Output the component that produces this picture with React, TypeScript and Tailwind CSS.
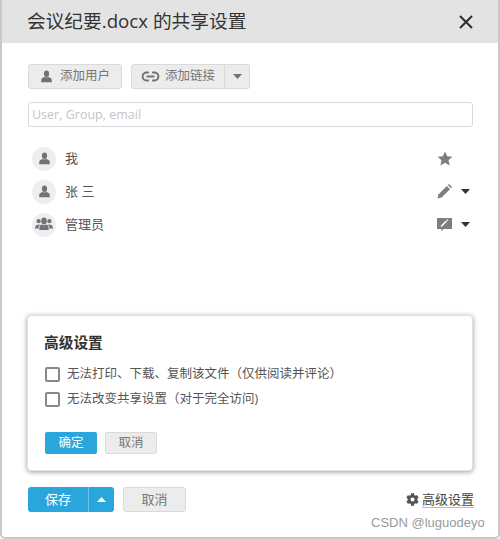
import { Link2 } from 'lucide-react';
import { FaCog } from 'react-icons/fa';

const cjk = 'font-["Open_Sans","Noto_Sans_CJK_SC",sans-serif]';

function UserIcon({ size = 14 }: { size?: number }) {
  return (
    <svg width={size} height={size} viewBox="0 0 16 16" fill="currentColor">
      <ellipse cx="8" cy="4.6" rx="3.2" ry="4" />
      <path d="M5.8 8.4 C4 9.6 1.5 10 1.5 12.6 V15 H14.5 V12.6 C14.5 10 12 9.6 10.2 8.4 C9 9.6 7 9.6 5.8 8.4 Z" />
    </svg>
  );
}

function GroupIcon() {
  return (
    <svg width="18" height="15" viewBox="0 0 18 15" fill="currentColor">
      <circle cx="3.6" cy="4.2" r="2.1" />
      <circle cx="14.4" cy="4.2" r="2.1" />
      <ellipse cx="9" cy="4" rx="2.8" ry="3.4" />
      <path d="M0 11 C0 8.4 2 7.4 4.4 7.4 L5 7.8 C4 8.6 3.6 9.8 3.6 11.6 H0 Z" />
      <path d="M18 11 C18 8.4 16 7.4 13.6 7.4 L13 7.8 C14 8.6 14.4 9.8 14.4 11.6 H18 Z" />
      <path d="M6.4 7.6 C8 8.6 10 8.6 11.6 7.6 C13 8.2 13.6 9.6 13.6 11 V13 H4.4 V11 C4.4 9.6 5 8.2 6.4 7.6 Z" />
    </svg>
  );
}

function Caret({ up = false, className = '' }: { up?: boolean; className?: string }) {
  return (
    <svg width="9" height="5" viewBox="0 0 9 5" fill="currentColor" className={className}>
      <path d={up ? 'M0 5 L4.5 0 L9 5 Z' : 'M0 0 L9 0 L4.5 5 Z'} />
    </svg>
  );
}

function Avatar({ children }: { children: React.ReactNode }) {
  return (
    <div className="w-6 h-6 rounded-full bg-[#eceef0] text-[#707478] flex items-center justify-center">
      {children}
    </div>
  );
}

function Row({ icon, name, action }: { icon: React.ReactNode; name: string; action: React.ReactNode }) {
  return (
    <div className="h-[33px] flex items-center pl-[4px]">
      <Avatar>{icon}</Avatar>
      <span className="ml-[9px] text-[13px] text-[#555]">{name}</span>
      <div className="ml-auto w-[36px] flex items-center text-[#7b7e82]">{action}</div>
    </div>
  );
}

function Check({ label }: { label: string }) {
  return (
    <div className="h-[25px] flex items-center">
      <span className="w-[15px] h-[15px] border-2 border-[#85888c] rounded-[2px] bg-white" />
      <span className="ml-[7px] text-[12.5px] text-[#555]">{label}</span>
    </div>
  );
}

export default function App() {
  return (
    <div className={`relative w-[500px] h-[539px] bg-white overflow-hidden ${cjk}`}>
      <div className="h-[539px] border-l-2 border-r-2 border-b-2 border-[#c9c9c9] rounded-b-[5px] flex flex-col">
        {/* header */}
        <div className="h-[43px] shrink-0 bg-[#e3e3e3] flex items-center justify-between pl-[25px] pr-[25px]">
          <span className="text-[18.7px] text-[#333]">会议纪要.docx 的共享设置</span>
          <svg width="14" height="14" viewBox="0 0 14 14" stroke="#2d2d2d" strokeWidth="2" fill="none">
            <path d="M1 1 L13 13 M13 1 L1 13" />
          </svg>
        </div>

        <div className="flex-1 flex flex-col pl-[26px] pr-[25px]">
          {/* add buttons */}
          <div className="mt-[21px] flex items-center">
            <button className="w-[94px] h-[25px] bg-[#ececec] border border-[#dadada] rounded-[3px] flex items-center justify-center gap-[7px] text-[12.5px] text-[#777]">
              <span className="text-[#6f7276]"><UserIcon size={13} /></span>
              添加用户
            </button>
            <div className="ml-[9px] h-[25px] flex">
              <button className="w-[94px] h-[25px] bg-[#ececec] border border-[#dadada] rounded-l-[3px] flex items-center justify-center gap-[5px] text-[12.5px] text-[#777]">
                <Link2 size={19} className="text-[#6f7276]" strokeWidth={2.4} />
                添加链接
              </button>
              <button className="w-[25px] h-[25px] bg-[#ececec] border border-l-0 border-[#dadada] rounded-r-[3px] flex items-center justify-center text-[#6f7276]">
                <Caret />
              </button>
            </div>
          </div>

          {/* search */}
          <input
            className="mt-[13px] w-[445px] h-[25px] border border-[#d9d9d9] rounded-[3px] px-[3px] text-[12.5px] outline-none placeholder:text-[#c4c4c4]"
            placeholder="User, Group, email"
          />

          {/* people */}
          <div className="mt-[15px]">
            <Row
              icon={<UserIcon size={13} />}
              name="我"
              action={
                <svg width="16" height="15" viewBox="0 0 16 15" fill="currentColor">
                  <path d="M8 0.5 L10.2 5.2 L15.4 5.8 L11.5 9.2 L12.6 14.4 L8 11.8 L3.4 14.4 L4.5 9.2 L0.6 5.8 L5.8 5.2 Z" />
                </svg>
              }
            />
            <Row
              icon={<UserIcon size={13} />}
              name="张 三"
              action={
                <>
                  <svg width="15" height="15" viewBox="0 0 15 15" fill="currentColor">
                    <path d="M0.5 14.5 L1.4 10.4 L9.8 2 L13 5.2 L4.6 13.6 Z" />
                    <path d="M10.8 1 L12 0 L15 3 L14 4.2 Z" />
                  </svg>
                  <Caret className="ml-[9px] text-[#333]" />
                </>
              }
            />
            <Row
              icon={<GroupIcon />}
              name="管理员"
              action={
                <>
                  <svg width="15" height="15" viewBox="0 0 15 15">
                    <path d="M0 1 H15 V12 H6.5 L4.5 14.5 V12 H0 Z" fill="currentColor" />
                    <path d="M4 9.5 L9.5 4 M10 3.4 L11 2.6" stroke="#fff" strokeWidth="1.6" />
                  </svg>
                  <Caret className="ml-[9px] text-[#333]" />
                </>
              }
            />
          </div>

          {/* advanced card */}
          <div className="mt-[74px] ml-[-1px] w-[446px] h-[156px] bg-white border border-[#e2e2e2] rounded-[4px] shadow-[0_1px_5px_rgba(0,0,0,0.4)] px-[17px] pt-[16px]">
            <div className="ml-[-1px] text-[14.7px] font-bold text-[#333] leading-[20px]">高级设置</div>
            <div className="mt-[10px]">
              <Check label="无法打印、下载、复制该文件（仅供阅读并评论）" />
              <Check label="无法改变共享设置（对于完全访问)" />
            </div>
            <div className="mt-[20px] flex gap-[8px]">
              <button className="w-[52px] h-[22px] bg-[#2ba6dc] rounded-[2px] text-white text-[12.5px]">确定</button>
              <button className="w-[52px] h-[22px] bg-[#ececec] border border-[#dadada] rounded-[2px] text-[#777] text-[12.5px]">取消</button>
            </div>
          </div>

          {/* footer */}
          <div className="mt-[16px] flex items-center">
            <div className="h-[25px] w-[86px] flex rounded-[3px] bg-[#2ba6dc] text-white">
              <button className="w-[61px] h-[25px] border-r border-[#6fc3e8] text-[13px]">保存</button>
              <button className="flex-1 flex items-center justify-center"><Caret up /></button>
            </div>
            <button className="ml-[9px] w-[63px] h-[25px] bg-[#ececec] border border-[#dadada] rounded-[3px] text-[#777] text-[13px]">取消</button>
            <div className="ml-auto flex items-center gap-[3px] text-[13px] text-[#444] mr-[-1px]">
              <FaCog size={13} className="text-[#555]" />
              <span className="border-b border-[#bbb] leading-[15px]">高级设置</span>
            </div>
          </div>
        </div>
      </div>

      {/* watermark */}
      <span className="absolute left-[371px] top-[515px] text-[13px] leading-[16px] text-[#9a9a9a] font-['Liberation_Sans',sans-serif]">
        CSDN @luguodeyo
      </span>
    </div>
  );
}
